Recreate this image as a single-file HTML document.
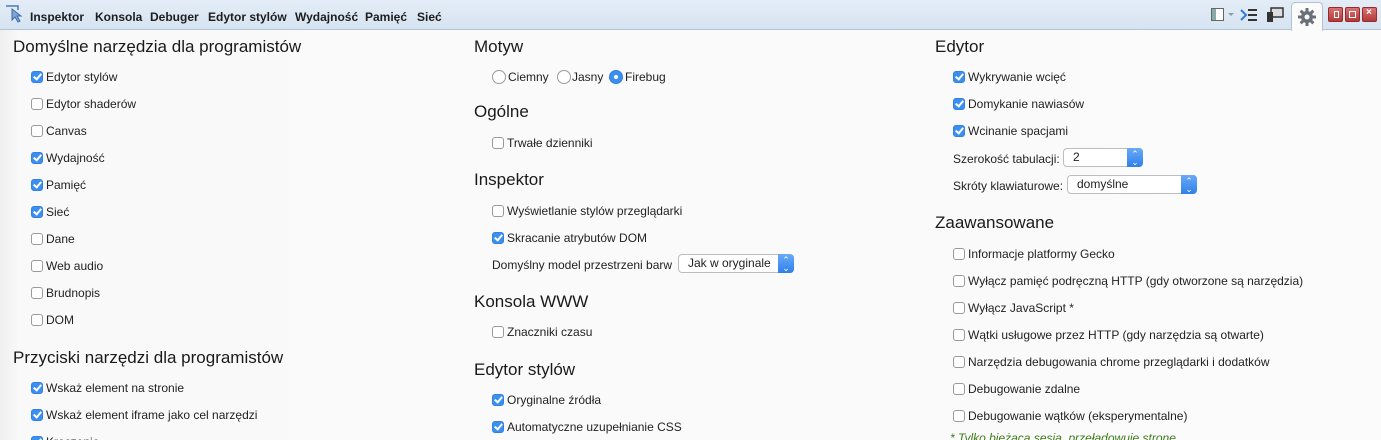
<!DOCTYPE html>
<html><head><meta charset="utf-8"><style>
*{margin:0;padding:0;box-sizing:border-box}
html,body{width:1381px;height:440px;overflow:hidden}
body{font-family:"Liberation Sans","DejaVu Sans",sans-serif;background:linear-gradient(90deg,#efefef 0,#f9f9f9 20px,#fbfbfb 100%);position:relative;color:#222}
.tb{position:absolute;left:0;top:0;width:1381px;height:30px;background:linear-gradient(#e4edf7,#d6e3f1);border-bottom:1px solid #b4c3d4}
.tab{position:absolute;top:10px;font-size:12px;font-weight:bold;color:#1d1d1d;line-height:14px}
.h{position:absolute;font-size:17px;line-height:20px;color:#1a1a1a}
.i{position:absolute;font-size:12px;line-height:16px;color:#222;white-space:nowrap}
.cb{position:absolute;width:12px;height:12px;border:1px solid #9a9a9a;border-radius:3px;background:#fff}
.cb.on{background:#3b8ff1;border-color:#3280e0}
.cb.on:after{content:"";position:absolute;left:3px;top:0px;width:3px;height:6px;border:solid #fff;border-width:0 2px 2px 0;transform:rotate(40deg)}
.rd{position:absolute;width:14px;height:14px;border:1px solid #9a9a9a;border-radius:50%;background:#fff}
.rd.on{background:#3b8ff1;border-color:#3280e0}
.rd.on:after{content:"";position:absolute;left:4px;top:4px;width:4px;height:4px;border-radius:50%;background:#fff}
.sel{position:absolute;height:19px;border:1px solid #bdbdbd;border-radius:4px;background:#fff;font-size:12px;line-height:17px;padding-left:9px}
.sel b{position:absolute;right:-1px;top:-1px;width:16px;height:19px;background:linear-gradient(#6aaaf7,#2f80ea);border-radius:0 4px 4px 0;color:#fff;font-size:9px;line-height:8px;text-align:center;font-weight:normal;padding-top:2px}
.foot{position:absolute;font-size:12px;font-style:italic;color:#3d7a1a}
.wb{position:absolute;top:7px;width:15px;height:15px;background:linear-gradient(#d97373,#b33a3a);border:1px solid #9a2a2a;border-radius:2px}
.wb i{position:absolute;left:3px;top:3px;width:7px;height:7px;border:1px solid #fff}
</style></head><body>
<div class="tb">
<svg style="position:absolute;left:5px;top:4px" width="18" height="20" viewBox="0 0 18 20"><path d="M1 2h12v4" fill="none" stroke="#4a7ab8" stroke-width="1.5"/><path d="M7 5l0 11 3-3 3 5 2-1-3-5 4 0z" fill="#7fa6d6" stroke="#3d6aa8" stroke-width="1"/></svg>
<span class="tab" style="left:30px">Inspektor</span>
<span class="tab" style="left:95px">Konsola</span>
<span class="tab" style="left:150px">Debuger</span>
<span class="tab" style="left:208px">Edytor stylów</span>
<span class="tab" style="left:295px">Wydajność</span>
<span class="tab" style="left:365px">Pamięć</span>
<span class="tab" style="left:417px">Sieć</span>
<svg style="position:absolute;left:1211px;top:8px" width="26" height="14"><rect x="0.5" y="0.5" width="12" height="12" fill="#fff" stroke="#666"/><rect x="1" y="1" width="4" height="11" fill="#8aa"/><path d="M17 5h6l-3 3z" fill="#8a9aaa"/></svg>
<svg style="position:absolute;left:1240px;top:8px" width="18" height="14"><path d="M1 2l5 5-5 5" fill="none" stroke="#2f7ee0" stroke-width="2"/><path d="M8 2h9M8 7h9M8 12h9" stroke="#333" stroke-width="2"/></svg>
<svg style="position:absolute;left:1266px;top:7px" width="18" height="16"><rect x="5" y="1" width="12" height="9" fill="#ddd" stroke="#333" stroke-width="1.5"/><rect x="1" y="5" width="6" height="10" fill="#333"/></svg>
<div style="position:absolute;left:1291px;top:2px;width:32px;height:29px;background:#fbfbfb;border:1px solid #b4c3d4;border-bottom:none;border-radius:4px 4px 0 0"></div>
<svg style="position:absolute;left:1298px;top:8px" width="18" height="18" viewBox="0 0 18 18"><g fill="#6a7078"><circle cx="9" cy="9" r="6"/><rect x="7.5" y="0" width="3" height="18"/><rect x="0" y="7.5" width="18" height="3"/><rect x="7.5" y="0" width="3" height="18" transform="rotate(45 9 9)"/><rect x="7.5" y="0" width="3" height="18" transform="rotate(-45 9 9)"/></g><circle cx="9" cy="9" r="2.5" fill="#fbfbfb"/></svg>
<div class="wb" style="left:1328px"><i style="left:5px;width:5px"></i></div>
<div class="wb" style="left:1345px"><i></i></div>
<div class="wb" style="left:1362px"><span style="position:absolute;left:3px;top:-1px;color:#fff;font-size:10px;font-weight:bold">×</span></div>
</div>

<div class="h" style="left:13px;top:37px">Domyślne narzędzia dla programistów</div>
<div class="cb on" style="left:31px;top:71px"></div><div class="i" style="left:46px;top:69px">Edytor stylów</div>
<div class="cb" style="left:31px;top:98px"></div><div class="i" style="left:46px;top:96px">Edytor shaderów</div>
<div class="cb" style="left:31px;top:125px"></div><div class="i" style="left:46px;top:123px">Canvas</div>
<div class="cb on" style="left:31px;top:152px"></div><div class="i" style="left:46px;top:150px">Wydajność</div>
<div class="cb on" style="left:31px;top:179px"></div><div class="i" style="left:46px;top:177px">Pamięć</div>
<div class="cb on" style="left:31px;top:206px"></div><div class="i" style="left:46px;top:204px">Sieć</div>
<div class="cb" style="left:31px;top:233px"></div><div class="i" style="left:46px;top:231px">Dane</div>
<div class="cb" style="left:31px;top:260px"></div><div class="i" style="left:46px;top:258px">Web audio</div>
<div class="cb" style="left:31px;top:287px"></div><div class="i" style="left:46px;top:285px">Brudnopis</div>
<div class="cb" style="left:31px;top:314px"></div><div class="i" style="left:46px;top:312px">DOM</div>
<div class="h" style="left:13px;top:348px">Przyciski narzędzi dla programistów</div>
<div class="cb on" style="left:31px;top:382px"></div><div class="i" style="left:46px;top:380px">Wskaż element na stronie</div>
<div class="cb on" style="left:31px;top:409px"></div><div class="i" style="left:46px;top:407px">Wskaż element iframe jako cel narzędzi</div>
<div class="cb on" style="left:31px;top:436px"></div><div class="i" style="left:46px;top:434px">Kroczenie</div>

<div class="h" style="left:474px;top:37px">Motyw</div>
<div class="rd" style="left:492px;top:70px"></div><div class="i" style="left:508px;top:69px">Ciemny</div>
<div class="rd" style="left:557px;top:70px"></div><div class="i" style="left:572px;top:69px">Jasny</div>
<div class="rd on" style="left:609px;top:70px"></div><div class="i" style="left:625px;top:69px">Firebug</div>
<div class="h" style="left:474px;top:102px">Ogólne</div>
<div class="cb" style="left:492px;top:137px"></div><div class="i" style="left:507px;top:135px">Trwałe dzienniki</div>
<div class="h" style="left:474px;top:170px">Inspektor</div>
<div class="cb" style="left:492px;top:205px"></div><div class="i" style="left:507px;top:203px">Wyświetlanie stylów przeglądarki</div>
<div class="cb on" style="left:492px;top:232px"></div><div class="i" style="left:507px;top:230px">Skracanie atrybutów DOM</div>
<div class="i" style="left:492px;top:257px">Domyślny model przestrzeni barw</div>
<div class="sel" style="left:678px;top:254px;width:116px">Jak w oryginale<b>⌃<br>⌄</b></div>
<div class="h" style="left:474px;top:292px">Konsola WWW</div>
<div class="cb" style="left:492px;top:326px"></div><div class="i" style="left:507px;top:324px">Znaczniki czasu</div>
<div class="h" style="left:474px;top:360px">Edytor stylów</div>
<div class="cb on" style="left:492px;top:394px"></div><div class="i" style="left:507px;top:392px">Oryginalne źródła</div>
<div class="cb on" style="left:492px;top:421px"></div><div class="i" style="left:507px;top:419px">Automatyczne uzupełnianie CSS</div>

<div class="h" style="left:935px;top:37px">Edytor</div>
<div class="cb on" style="left:953px;top:71px"></div><div class="i" style="left:968px;top:69px">Wykrywanie wcięć</div>
<div class="cb on" style="left:953px;top:98px"></div><div class="i" style="left:968px;top:96px">Domykanie nawiasów</div>
<div class="cb on" style="left:953px;top:125px"></div><div class="i" style="left:968px;top:123px">Wcinanie spacjami</div>
<div class="i" style="left:953px;top:151px">Szerokość tabulacji:</div>
<div class="sel" style="left:1063px;top:148px;width:80px">2<b>⌃<br>⌄</b></div>
<div class="i" style="left:953px;top:178px">Skróty klawiaturowe:</div>
<div class="sel" style="left:1067px;top:175px;width:130px">domyślne<b>⌃<br>⌄</b></div>
<div class="h" style="left:935px;top:213px">Zaawansowane</div>
<div class="cb" style="left:953px;top:248px"></div><div class="i" style="left:968px;top:246px">Informacje platformy Gecko</div>
<div class="cb" style="left:953px;top:275px"></div><div class="i" style="left:968px;top:273px">Wyłącz pamięć podręczną HTTP (gdy otworzone są narzędzia)</div>
<div class="cb" style="left:953px;top:302px"></div><div class="i" style="left:968px;top:300px">Wyłącz JavaScript *</div>
<div class="cb" style="left:953px;top:329px"></div><div class="i" style="left:968px;top:327px">Wątki usługowe przez HTTP (gdy narzędzia są otwarte)</div>
<div class="cb" style="left:953px;top:356px"></div><div class="i" style="left:968px;top:354px">Narzędzia debugowania chrome przeglądarki i dodatków</div>
<div class="cb" style="left:953px;top:383px"></div><div class="i" style="left:968px;top:381px">Debugowanie zdalne</div>
<div class="cb" style="left:953px;top:410px"></div><div class="i" style="left:968px;top:408px">Debugowanie wątków (eksperymentalne)</div>
<div class="foot" style="left:950px;top:431px">* Tylko bieżąca sesja, przeładowuje stronę</div>
</body></html>
